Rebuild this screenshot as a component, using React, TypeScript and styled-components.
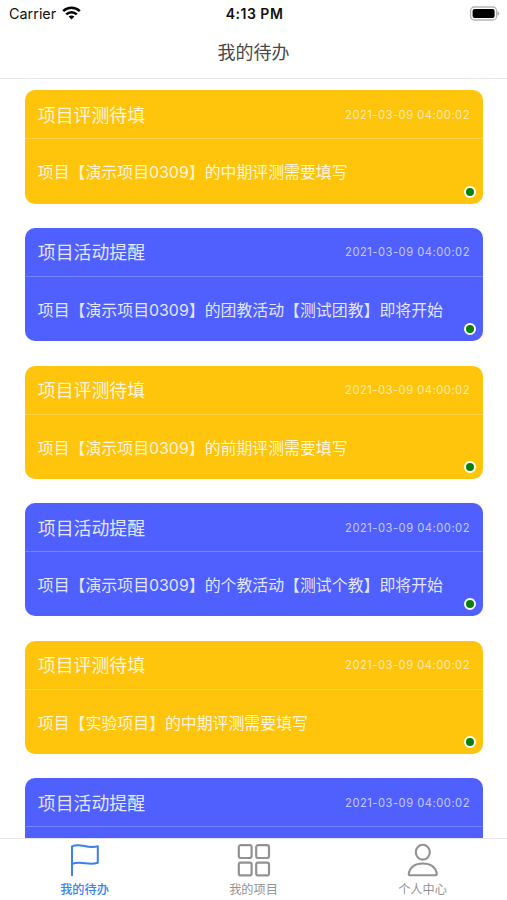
import React from "react";
import styled, { createGlobalStyle } from "styled-components";

const GlobalStyle = createGlobalStyle`
  * { box-sizing: border-box; }
  body { margin: 0; background: #fff; overflow: hidden; }
`;

const Screen = styled.div`
  display: flex;
  flex-direction: column;
  width: 507px;
  height: 900px;
  overflow: hidden;
  background: #fff;
  font-family: Inter, "Noto Sans CJK SC", sans-serif;
`;

const StatusBar = styled.div`
  flex: none;
  display: grid;
  grid-template-columns: 1fr auto 1fr;
  align-items: center;
  height: 27px;
  padding: 0 7px 0 9px;
  color: #111;
  font-size: 14px;
  line-height: 27px;
`;

const Carrier = styled.div`
  display: flex;
  align-items: center;
  gap: 6px;
  font-size: 14.4px;
  line-height: 26px;

  svg {
    margin-top: -2px;
  }
`;

const Clock = styled.div`
  font-size: 14px;
  font-weight: 600;
  line-height: 26px;
  letter-spacing: 0.5px;
`;

const BatterySlot = styled.div`
  display: flex;
  justify-content: flex-end;
  padding-bottom: 1px;
`;

const Header = styled.header`
  flex: none;
  height: 52px;
  border-bottom: 1px solid #e6e6e8;
  color: #484848;
  font-size: 18px;
  line-height: 52px;
  text-align: center;
`;

const TodoList = styled.main`
  flex: 1;
  min-height: 0;
  display: flex;
  flex-direction: column;
  gap: 24.2px;
  padding: 11.45px 24.5px 0 25.3px;
  overflow: hidden;
`;

const Card = styled.article<{ $color: string }>`
  position: relative;
  flex: none;
  height: 113.35px;
  border-radius: 10px;
  background: ${(p) => p.$color};
  color: rgba(255, 255, 255, 0.86);
`;

const CardHead = styled.div`
  display: flex;
  align-items: center;
  justify-content: space-between;
  height: 49px;
  padding: 0 12.5px;
  border-bottom: 1px solid rgba(255, 255, 255, 0.23);
`;

const CardTitle = styled.h2`
  margin: 0;
  padding-top: 2px;
  font-size: 17.9px;
  font-weight: 400;
  line-height: 47px;
`;

const Time = styled.time`
  padding-top: 1px;
  color: rgba(255, 255, 255, 0.68);
  font-size: 11.2px;
  letter-spacing: 0.5px;
`;

const CardBody = styled.p`
  margin: 0;
  padding: 0 12.5px;
  font-size: 15.9px;
  line-height: 67px;
  white-space: nowrap;
`;

const StatusDot = styled.span`
  position: absolute;
  right: 6.2px;
  bottom: 6px;
  width: 12px;
  height: 12px;
  border: 2px solid #fff;
  border-radius: 50%;
  background: #08800b;
`;

const TabBar = styled.nav`
  flex: none;
  display: grid;
  grid-template-columns: repeat(3, 1fr);
  height: 62px;
  border-top: 1px solid #e6e6e8;
  background: #fff;
`;

const Tab = styled.div<{ $active?: boolean }>`
  display: flex;
  flex-direction: column;
  align-items: center;
  padding-top: 4px;
  color: ${(p) => (p.$active ? "#3a80f0" : "#929292")};

  svg {
    display: block;
    flex: none;
  }
`;

const TabLabel = styled.span<{ $active?: boolean }>`
  font-size: 12.2px;
  font-weight: ${(p) => (p.$active ? 500 : 400)};
  line-height: 18px;
  margin-top: 4px;
`;

const WifiIcon = () => (
  <svg width="19" height="14" viewBox="0 0 19 14" fill="none" stroke="#050505" strokeWidth="2.5">
    <path d="M1.2 5.2C5.8 .7 13.2 .7 17.8 5.2" />
    <path d="M4.2 8.3C7.2 5.4 11.8 5.4 14.8 8.3" />
    <path d="M9.5 13.4 6.6 10.5C8.3 9 10.7 9 12.4 10.5Z" fill="#050505" stroke="none" />
  </svg>
);

const BatteryIcon = () => (
  <svg width="31" height="15" viewBox="0 0 31 15">
    <rect x="1.6" y="1" width="26" height="13" rx="3.8" fill="#fff" stroke="#b5b5b5" strokeWidth="1.3" />
    <rect x="3.6" y="3" width="22" height="9" rx="2" fill="#000" />
    <path d="M28.5 5.2Q30.3 5.8 30.3 7.5T28.5 9.8Z" fill="#aaa" />
  </svg>
);

const FlagIcon = () => (
  <svg width="34" height="34" viewBox="0 0 34 34" fill="none" stroke="currentColor" strokeWidth="2" strokeLinecap="round" strokeLinejoin="round">
    <path d="M4 32.2V3.3C13-.6 18.5 6.3 29.8 3.3V19.7C20 23.3 15 17.3 4.2 20.8" />
  </svg>
);

const GridIcon = () => (
  <svg width="34" height="34" viewBox="0 0 34 34" fill="none" stroke="currentColor" strokeWidth="2.2">
    <rect x="1.8" y="2.2" width="12.8" height="12.8" rx="2" />
    <rect x="19.2" y="2.2" width="12.8" height="12.8" rx="2" />
    <rect x="1.8" y="19.6" width="12.8" height="12.8" rx="2" />
    <rect x="19.2" y="19.6" width="12.8" height="12.8" rx="2" />
  </svg>
);

const PersonIcon = () => (
  <svg width="34" height="34" viewBox="0 0 34 34" fill="none" stroke="currentColor" strokeWidth="2.1">
    <ellipse cx="16.8" cy="9.2" rx="7" ry="7.4" />
    <path d="M4.2 32.2H29.4Q31.1 32.2 30.8 30.4C29.3 23.6 23.7 20.5 16.8 20.5S4.3 23.6 2.8 30.4Q2.5 32.2 4.2 32.2Z" />
  </svg>
);

const YELLOW = "#ffc40c";
const BLUE = "#5060ff";

const todos = [
  { title: "项目评测待填", text: "项目【演示项目0309】的中期评测需要填写", color: YELLOW },
  { title: "项目活动提醒", text: "项目【演示项目0309】的团教活动【测试团教】即将开始", color: BLUE },
  { title: "项目评测待填", text: "项目【演示项目0309】的前期评测需要填写", color: YELLOW },
  { title: "项目活动提醒", text: "项目【演示项目0309】的个教活动【测试个教】即将开始", color: BLUE },
  { title: "项目评测待填", text: "项目【实验项目】的中期评测需要填写", color: YELLOW },
  { title: "项目活动提醒", text: "", color: BLUE },
];

const tabs = [
  { label: "我的待办", Icon: FlagIcon, active: true },
  { label: "我的项目", Icon: GridIcon, active: false },
  { label: "个人中心", Icon: PersonIcon, active: false },
];

export default function App() {
  return (
    <>
      <GlobalStyle />
      <Screen lang="zh-CN">
        <StatusBar>
          <Carrier>
            Carrier
            <WifiIcon />
          </Carrier>
          <Clock>4:13 PM</Clock>
          <BatterySlot>
            <BatteryIcon />
          </BatterySlot>
        </StatusBar>
        <Header>我的待办</Header>
        <TodoList>
          {todos.map((todo, i) => (
            <Card key={i} $color={todo.color}>
              <CardHead>
                <CardTitle>{todo.title}</CardTitle>
                <Time>2021-03-09 04:00:02</Time>
              </CardHead>
              <CardBody>{todo.text}</CardBody>
              <StatusDot />
            </Card>
          ))}
        </TodoList>
        <TabBar>
          {tabs.map(({ label, Icon, active }) => (
            <Tab key={label} $active={active}>
              <Icon />
              <TabLabel $active={active}>{label}</TabLabel>
            </Tab>
          ))}
        </TabBar>
      </Screen>
    </>
  );
}
